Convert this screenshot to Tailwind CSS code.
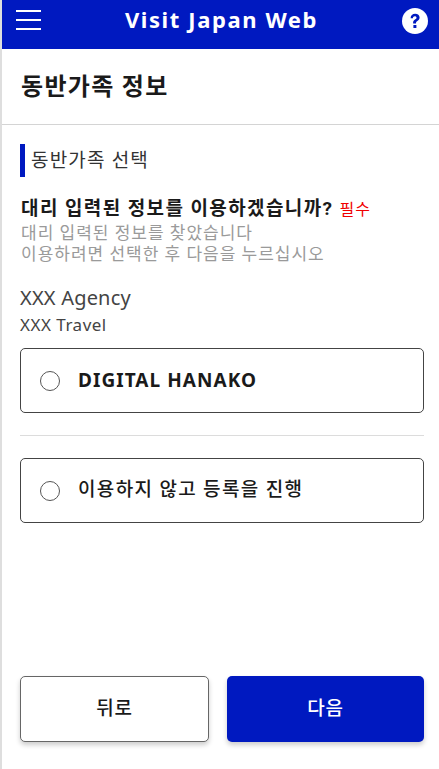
<!doctype html>
<html>

<head>
    <meta charset="UTF-8">
    <meta name="viewport" content="width=device-width, initial-scale=1.0">
    <script src="https://cdn.jsdelivr.net/npm/@tailwindcss/browser@4"></script>
    <title>Visit Japan Web</title>
</head>

<body class="bg-white font-['Roboto','Noto_Sans_CJK_KR',sans-serif] text-[#1a1a1a]">
    <div class="h-[769px] w-[439px] flex flex-col border-l-2 border-[#dedede] overflow-hidden">
        <header class="h-[49px] shrink-0 bg-[#0019c0] flex items-center justify-between pl-[14px] pr-[10px] pb-[9px] text-white">
            <svg class="w-[26px] h-[22px]" viewBox="0 0 26 22" fill="#fff">
                <rect x="0" y="1" width="25" height="2" />
                <rect x="0" y="10" width="25" height="2" />
                <rect x="0" y="19" width="25" height="2" />
            </svg>
            <h1 class="font-['Noto_Sans',sans-serif] font-bold text-[22px] leading-none tracking-[1.6px] mb-[3px]">Visit Japan Web</h1>
            <svg class="w-[28px] h-[28px] mt-[2px]" viewBox="0 0 28 28">
                <circle cx="14" cy="14" r="13" fill="#fff" />
                <path d="M9.6 11.2c0-2.6 1.9-4.4 4.6-4.4 2.6 0 4.4 1.6 4.4 3.8 0 1.6-.8 2.6-2.2 3.5-1.1.7-1.4 1.2-1.4 2.3h-2.9c-.1-1.9.5-3 1.9-3.9 1-.7 1.5-1.1 1.5-1.8 0-.8-.7-1.4-1.7-1.4-1.1 0-1.8.7-1.9 1.9z" fill="#0019c0" />
                <rect x="12.4" y="18" width="3" height="3" fill="#0019c0" />
            </svg>
        </header>

        <div class="h-[76px] shrink-0 border-b border-[#d4d4d4] flex items-center pl-[19px]">
            <h2 class="text-[24px] font-bold leading-none tracking-[1.3px]">동반가족 정보</h2>
        </div>

        <main class="flex-1 flex flex-col pl-[18px] pr-[15px]">
            <h3 class="mt-[19px] h-[33px] border-l-[5px] border-[#0019c0] pl-[6px] flex items-center text-[19px] font-normal leading-none tracking-[1.2px] text-[#333]">동반가족 선택</h3>

            <p class="mt-[20px] ml-[1px] text-[19px] font-bold leading-[24px] tracking-[1.4px] whitespace-nowrap">대리 입력된 정보를 이용하겠습니까? <span class="text-[16px] font-normal tracking-[1px] text-[#f00000]">필수</span></p>
            <p class="mt-[1px] ml-[1px] text-[17px] leading-[21px] tracking-[1px] text-[#9a9a9a] whitespace-nowrap">대리 입력된 정보를 찾았습니다<br>이용하려면 선택한 후 다음을 누르십시오</p>

            <p class="mt-[20px] text-[20px] leading-[26px] tracking-[0.2px] text-[#444] font-['Noto_Sans',sans-serif]">XXX Agency</p>
            <p class="mt-[2px] text-[17px] leading-[24px] tracking-[0.5px] text-[#444] font-['Noto_Sans',sans-serif]">XXX Travel</p>

            <label class="mt-[11px] h-[65px] border border-[#444] rounded-[5px] flex items-center pl-[19px] gap-[18px]">
                <span class="w-5 h-5 rounded-full border border-[#555] bg-white shrink-0"></span>
                <span class="text-[19px] font-bold tracking-[1.05px] font-['Noto_Sans',sans-serif]">DIGITAL HANAKO</span>
            </label>

            <hr class="mt-[22px] border-[#dcdcdc]">

            <label class="mt-[22px] h-[65px] border border-[#444] rounded-[5px] flex items-center pl-[19px] gap-[18px]">
                <span class="w-5 h-5 rounded-full border border-[#555] bg-white shrink-0"></span>
                <span class="text-[19px] font-medium tracking-[1.35px]">이용하지 않고 등록을 진행</span>
            </label>

            <div class="mt-auto mb-[27px] flex gap-[18px]">
                <button class="w-[189px] h-[66px] bg-white border border-[#666] rounded-[5px] text-[19px] font-medium tracking-[0.8px] shadow-[0_3px_5px_rgba(0,0,0,0.2)]">뒤로</button>
                <button class="w-[197px] h-[66px] bg-[#0019c0] text-white rounded-[5px] text-[19px] font-medium tracking-[0.8px] shadow-[0_3px_5px_rgba(0,0,0,0.2)]">다음</button>
            </div>
        </main>
    </div>
</body>

</html>
